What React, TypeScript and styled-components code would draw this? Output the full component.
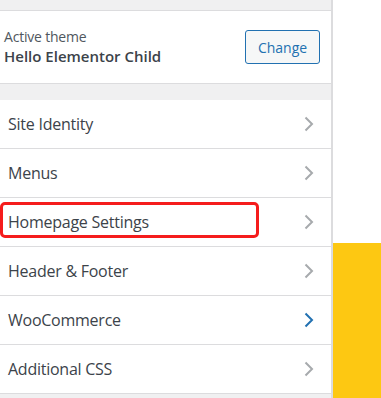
import React from "react";
import styled, { createGlobalStyle } from "styled-components";

const Global = createGlobalStyle`
  html, body { margin: 0; padding: 0; background: #fff; }
  body { font-family: "Open Sans", "Noto Sans", sans-serif; }
`;

const Page = styled.div`
  display: flex;
  width: 381px;
  height: 398px;
  overflow: hidden;
`;

const Panel = styled.div`
  width: 333px;
  flex-shrink: 0;
  background: #f0f0f1;
  border-right: 2px solid #dcdcde;
  padding-top: 10px;
  box-sizing: border-box;
`;

const Preview = styled.div`
  flex: 1;
  display: flex;
  flex-direction: column;
`;

const PreviewTop = styled.div`
  height: 243px;
  background: #fff;
`;

const Banner = styled.div`
  flex: 1;
  background: #fdc812;
`;

const ThemeBox = styled.div`
  display: flex;
  align-items: center;
  justify-content: space-between;
  height: 72px;
  background: #fff;
  border-top: 1px solid #dcdcde;
  border-bottom: 1px solid #dcdcde;
  padding: 0 11px 0 4px;
`;

const ThemeInfo = styled.div`
  display: flex;
  flex-direction: column;
`;

const ThemeLabel = styled.span`
  font-size: 14px;
  line-height: 18px;
  letter-spacing: -0.2px;
  color: #50575e;
`;

const ThemeName = styled.span`
  font-size: 15px;
  line-height: 20px;
  font-weight: 600;
  color: #3c434a;
`;

const ChangeButton = styled.button`
  width: 75px;
  height: 34px;
  border: 1px solid #2271b1;
  border-radius: 3px;
  background: #f6f7f7;
  color: #2271b1;
  font-family: inherit;
  font-size: 14px;
  padding: 0;
`;

const Sections = styled.div`
  margin-top: 16px;
  background: #fff;
`;

const Row = styled.div`
  position: relative;
  display: flex;
  align-items: center;
  justify-content: space-between;
  height: 48px;
  border-bottom: 1px solid #dcdcde;
  padding: 0 17px 0 8px;
  font-size: 16px;
  letter-spacing: -0.25px;
  color: #3c434a;
`;

const Highlight = styled.div`
  position: absolute;
  left: 0;
  top: 4px;
  width: 259px;
  height: 36px;
  box-sizing: border-box;
  border: 3px solid #f51c1c;
  border-radius: 5px;
`;

const Chevron = ({ active }: { active?: boolean }) => (
  <svg width="10" height="16" viewBox="0 0 10 16">
    <path
      d="M1.5 1.5 L8 8 L1.5 14.5"
      fill="none"
      stroke={active ? "#2271b1" : "#a7aaad"}
      strokeWidth="2"
    />
  </svg>
);

const items = [
  { label: "Site Identity" },
  { label: "Menus" },
  { label: "Homepage Settings", marked: true },
  { label: "Header & Footer" },
  { label: "WooCommerce", active: true },
  { label: "Additional CSS" },
];

const App = () => {
  return (
    <Page>
      <Global />
      <Panel>
        <ThemeBox>
          <ThemeInfo>
            <ThemeLabel>Active theme</ThemeLabel>
            <ThemeName>Hello Elementor Child</ThemeName>
          </ThemeInfo>
          <ChangeButton>Change</ChangeButton>
        </ThemeBox>
        <Sections>
          {items.map((it) => (
            <Row key={it.label}>
              <span>{it.label}</span>
              <Chevron active={it.active} />
              {it.marked && <Highlight />}
            </Row>
          ))}
        </Sections>
      </Panel>
      <Preview>
        <PreviewTop />
        <Banner />
      </Preview>
    </Page>
  );
};

export default App;
